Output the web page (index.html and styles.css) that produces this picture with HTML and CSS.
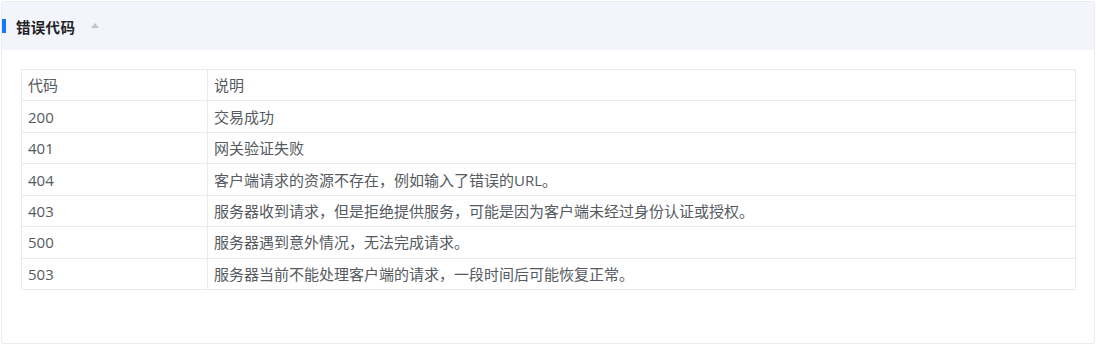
FILE: index.html
```html
<!DOCTYPE html>
<html lang="zh-CN">
<head>
<meta charset="utf-8">
<link rel="stylesheet" href="styles.css">
<title>错误代码</title>
</head>
<body>
<div class="card">
  <div class="card-head">
    <span class="bar"></span>
    <span class="title">错误代码</span>
    <span class="caret"></span>
  </div>
  <div class="card-body">
    <table class="codes">
      <colgroup><col class="c1"><col class="c2"></colgroup>
      <thead>
        <tr><td>代码</td><td>说明</td></tr>
      </thead>
      <tbody>
        <tr><td>200</td><td>交易成功</td></tr>
        <tr><td>401</td><td>网关验证失败</td></tr>
        <tr><td>404</td><td>客户端请求的资源不存在，例如输入了错误的URL。</td></tr>
        <tr><td>403</td><td>服务器收到请求，但是拒绝提供服务，可能是因为客户端未经过身份认证或授权。</td></tr>
        <tr><td>500</td><td>服务器遇到意外情况，无法完成请求。</td></tr>
        <tr><td>503</td><td>服务器当前不能处理客户端的请求，一段时间后可能恢复正常。</td></tr>
      </tbody>
    </table>
  </div>
</div>
</body>
</html>
```

FILE: styles.css
```css
html, body {
  margin: 0;
  padding: 0;
  background: #ffffff;
}
body {
  padding: 1px 3px 0 1px;
  font-family: "Open Sans", "Noto Sans CJK SC", sans-serif;
  color: #555a60;
}
.card {
  box-sizing: border-box;
  height: 343px;
  border: 1px solid #e9ebef;
  border-radius: 3px;
  background: #fff;
  display: flex;
  flex-direction: column;
}
.card-head {
  height: 48px;
  background: #f3f5fd;
  display: flex;
  align-items: center;
  flex-shrink: 0;
}
.bar {
  width: 4px;
  height: 14px;
  background: #1677ff;
  margin-left: 0;
  margin-right: 10px;
}
.title {
  font-family: "Noto Sans CJK SC", sans-serif;
  font-weight: 700;
  font-size: 14.5px;
  color: #222;
  letter-spacing: 0.3px;
}
.caret {
  width: 0;
  height: 0;
  border-left: 4.5px solid transparent;
  border-right: 4.5px solid transparent;
  border-bottom: 5px solid #c3c6cc;
  margin-left: 16px;
  margin-top: -1px;
}
.card-body {
  padding: 19px 18px 0 19px;
}
.codes {
  width: 100%;
  border-collapse: collapse;
  border: 1px solid #e6e8ec;
  font-size: 15px;
}
.codes col.c1 { width: 186px; }
.codes td {
  border: 1px solid #e8eaee;
  padding: 0 6px;
  height: 30.45px;
  line-height: 20px;
  vertical-align: middle;
  white-space: nowrap;
}
```
